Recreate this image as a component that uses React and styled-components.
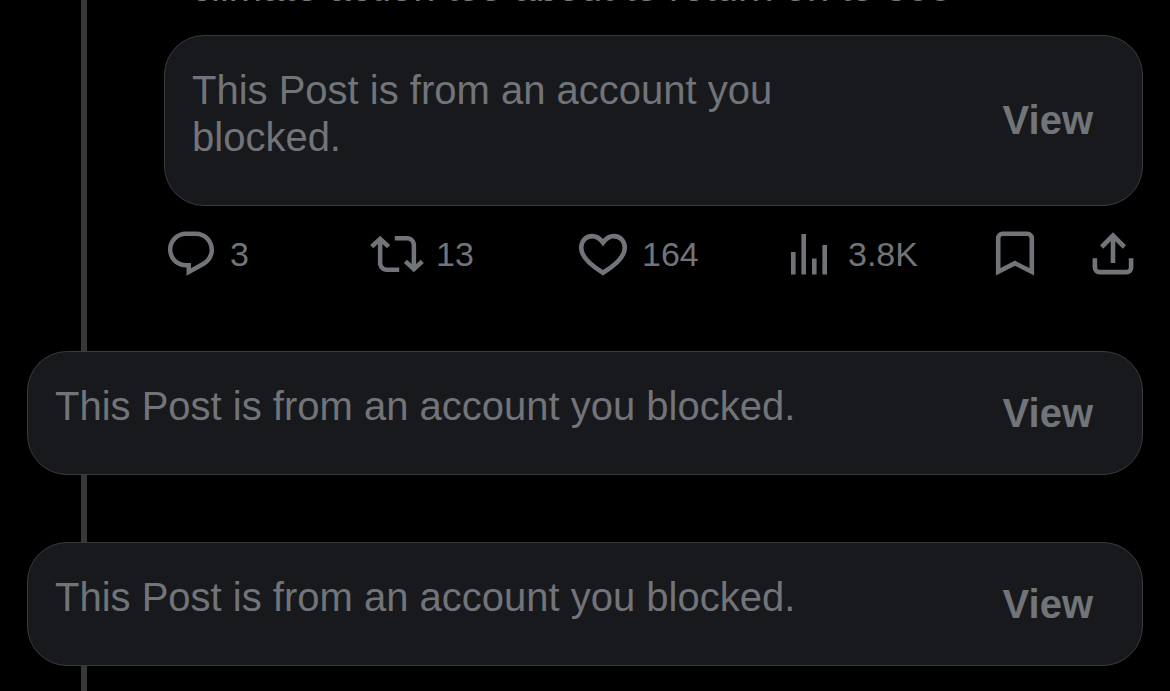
import React from 'react'
import styled, { createGlobalStyle } from 'styled-components'

const GlobalStyle = createGlobalStyle`
  * {
    box-sizing: border-box;
  }

  body {
    margin: 0;
    background: #000;
    color: #717479;
    font-family: 'Liberation Sans', Arial, sans-serif;
  }
`

/* the grey thread line runs behind every post */
const Thread = styled.main`
  min-height: 100vh;
  padding: 0 27px 25px;
  overflow: hidden;
  background: linear-gradient(#37383a, #37383a) 81px 0 / 6px 100% no-repeat;
`

const Post = styled.article`
  margin-bottom: 70px;
  padding-left: 137px;
`

/* only the tail of the post is left above the first card */
const PostText = styled.p`
  display: flex;
  align-items: flex-end;
  height: 35px;
  margin: 0;
  padding: 0 0 24px 27px;
  color: #77797b;
  font-size: 40px;
  line-height: 47px;
  white-space: nowrap;
`

const BlockedCard = styled.section`
  display: flex;
  align-items: center;
  justify-content: space-between;
  gap: 80px;
  padding: 0 49px 0 27px;
  border: 1px solid #3a3b3e;
  border-radius: 40px;
  background: #18191c;
`

const BlockedList = styled.div`
  display: grid;
  gap: 67px;
`

const Message = styled.p`
  margin: 0;
  padding: 31px 0 44px;
  font-size: 40px;
  line-height: 47px;
`

const ViewButton = styled.button`
  padding: 0;
  border: 0;
  background: none;
  color: inherit;
  font-family: inherit;
  font-size: 40px;
  font-weight: 700;
  line-height: 47px;
  cursor: pointer;
`

const Actions = styled.div`
  display: flex;
  margin-top: 21px;
  padding-right: 3px;
`

const Stats = styled.div`
  display: grid;
  flex: 1;
  grid-template-columns: repeat(4, 1fr);
`

const Shortcuts = styled.div`
  display: flex;
  gap: 44px;
`

const Action = styled.button`
  display: flex;
  align-items: center;
  gap: 12px;
  padding: 0;
  border: 0;
  background: none;
  color: inherit;
  font-family: inherit;
  font-size: 34px;
  line-height: 54px;
  cursor: pointer;
`

const Icon = styled.svg`
  display: block;
  width: 54px;
  height: 54px;
  fill: ${(props) => (props.$outline ? 'none' : 'currentColor')};
  stroke: ${(props) => (props.$outline ? 'currentColor' : 'none')};
  stroke-width: 4.6;
`

const ReplyIcon = () => (
  <Icon viewBox="0 0 24 24" aria-hidden="true">
    <path d="M1.751 10c0-4.42 3.584-8 8.005-8h4.366c4.49 0 8.129 3.64 8.129 8.13 0 2.96-1.607 5.68-4.196 7.11l-8.054 4.46v-3.69h-.067c-4.49.1-8.183-3.51-8.183-8.01zm8.005-6c-3.317 0-6.005 2.69-6.005 6 0 3.37 2.77 6.08 6.138 6.01l.351-.01h1.761v2.3l5.087-2.81c1.951-1.08 3.163-3.13 3.163-5.36 0-3.39-2.744-6.13-6.129-6.13H9.756z" />
  </Icon>
)

const RepostIcon = () => (
  <Icon viewBox="0 0 24 24" aria-hidden="true">
    <path d="M4.5 3.88l4.432 4.14-1.364 1.46L5.5 7.55V16c0 1.1.896 2 2 2H13v2H7.5c-2.209 0-4-1.79-4-4V7.55L1.432 9.48.068 8.02 4.5 3.88zM16.5 6H11V4h5.5c2.209 0 4 1.79 4 4v8.45l2.068-1.93 1.364 1.46-4.432 4.14-4.432-4.14 1.364-1.46 2.068 1.93V8c0-1.1-.896-2-2-2z" />
  </Icon>
)

const LikeIcon = () => (
  <Icon $outline viewBox="0 0 54 54" aria-hidden="true">
    <path d="M27 15.6C23.6 10.9 19.6 9.1 16.2 9.1 9.6 9.1 5.2 14.2 5.2 20.8 5.2 31 16.6 39.4 27 45.8 37.4 39.4 48.8 31 48.8 20.8 48.8 14.2 44.4 9.1 37.8 9.1 34.4 9.1 30.4 10.9 27 15.6z" />
  </Icon>
)

const ViewsIcon = () => (
  <Icon viewBox="0 0 54 54" aria-hidden="true">
    <path d="M9 25h4.6v22.4H9zM19.4 7H24v40.4h-4.6zM30 31.6h4.6v15.8H30zM40.4 18H45v29.4h-4.6z" />
  </Icon>
)

const BookmarkIcon = () => (
  <Icon $outline viewBox="0 0 54 54" aria-hidden="true">
    <path d="M10.2 44.7V11.2a4.5 4.5 0 0 1 4.5-4.5h24.6a4.5 4.5 0 0 1 4.5 4.5v33.5L27 36.2z" />
  </Icon>
)

const ShareIcon = () => (
  <Icon $outline viewBox="0 0 54 54" aria-hidden="true">
    <path d="M27 36V8.6M15.6 20 27 8.6 38.4 20M8.9 31.2v9.4a4.5 4.5 0 0 0 4.5 4.5h27.2a4.5 4.5 0 0 0 4.5-4.5v-9.4" />
  </Icon>
)

const stats = [
  { label: 'Reply', count: '3', icon: ReplyIcon },
  { label: 'Repost', count: '13', icon: RepostIcon },
  { label: 'Like', count: '164', icon: LikeIcon },
  { label: 'Views', count: '3.8K', icon: ViewsIcon },
]

const BlockedPost = () => (
  <BlockedCard>
    <Message>This Post is from an account you blocked.</Message>
    <ViewButton type="button">View</ViewButton>
  </BlockedCard>
)

const App = () => (
  <>
    <GlobalStyle />
    <Thread>
      <Post>
        <PostText>climate action too about to return on to 300</PostText>
        <BlockedPost />
        <Actions>
          <Stats>
            {stats.map(({ label, count, icon: StatIcon }) => (
              <Action key={label} type="button" aria-label={`${label} ${count}`}>
                <StatIcon />
                {count}
              </Action>
            ))}
          </Stats>
          <Shortcuts>
            <Action type="button" aria-label="Bookmark">
              <BookmarkIcon />
            </Action>
            <Action type="button" aria-label="Share">
              <ShareIcon />
            </Action>
          </Shortcuts>
        </Actions>
      </Post>
      <BlockedList>
        <BlockedPost />
        <BlockedPost />
      </BlockedList>
    </Thread>
  </>
)

export default App
